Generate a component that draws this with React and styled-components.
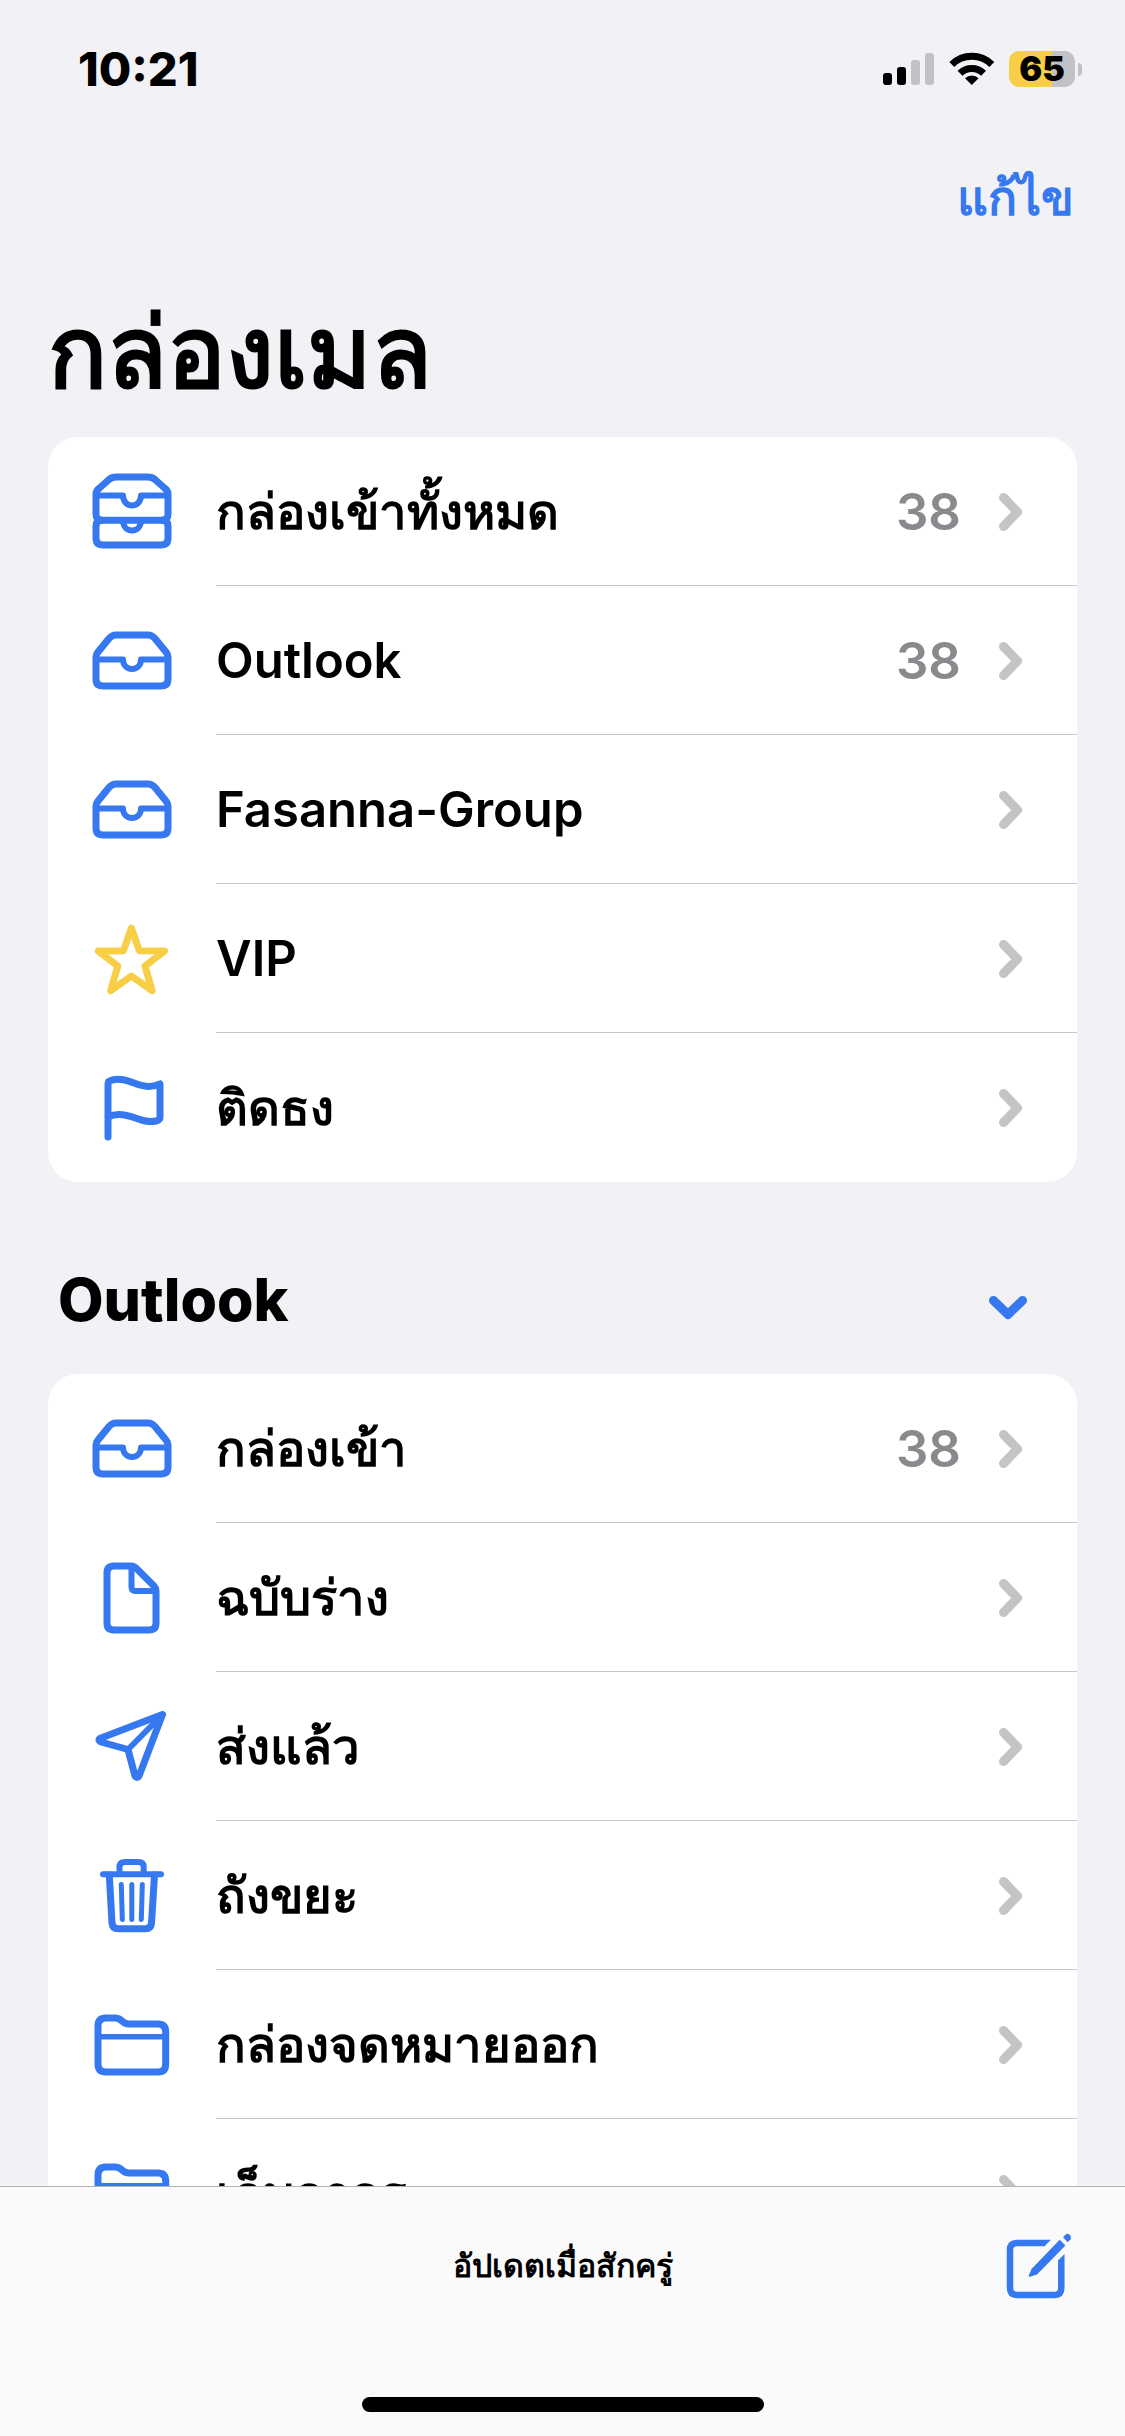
import React, { useState } from 'react'
import styled, { createGlobalStyle, ThemeProvider } from 'styled-components'

const theme = {
	blue: '#3578f0',
	yellow: '#f7ce46',
	grey: '#8a8a8e',
	chevron: '#c4c4c6',
	line: '#c6c6c8',
	page: '#f2f1f6',
	bar: '#fafafa'
}

const icons = {
	trays: (
		<>
			<path d="M10 49.3Q4 49.3 4 43V23Q4 20 7 17.5L17 8.5Q20 6 24 6H56Q60 6 63 8.5L73 17.5Q76 20 76 23V43Q76 49.3 70 49.3Z" />
			<path d="M10 49.3Q4 49.3 4 55V67Q4 74 11 74H69Q76 74 76 67V55Q76 49.3 70 49.3" />
			<path d="M4 24.5H31C31 30 34.5 34.5 40 34.5S49 30 49 24.5H76" strokeWidth="6" />
			<path d="M31 49.3C31 55 34.5 59.5 40 59.5S49 55 49 49.3" strokeWidth="6" />
		</>
	),
	tray: (
		<>
			<path d="M11 66Q4 66 4 59V37Q4 34.5 6 32L17 18.5Q20 15 24 15H56Q60 15 63 18.5L74 32Q76 34.5 76 37V59Q76 66 69 66Z" />
			<path d="M4 39.5H31C31 45 34.5 49 40 49S49 45 49 39.5H76" strokeWidth="6" />
		</>
	),
	star: (
		<path d="M39.4 10L47.3 32.7L72.6 33L53 48L60.1 72.7L39.4 58L18.7 72.7L25.8 48L6.2 33L31.5 32.7Z" />
	),
	flag: (
		<path d="M16 70V17Q16 14 19 13.4C34 9 44 19.5 57 19.5Q62 19.5 68 17V50Q68 53 64 54C50 57 42 47.5 27 47.5Q21 47.5 16 50" />
	),
	doc: (
		<>
			<path d="M22 9H39Q42 9 45 12L62 29Q64 31 64 34V66Q64 73 57 73H22Q15 73 15 66V16Q15 9 22 9Z" />
			<path d="M39.5 9V30Q39.5 34 43.5 34H64" strokeWidth="6" />
		</>
	),
	plane: (
		<>
			<path d="M70.5 8.5L9 32Q5 34 9 36L36 43.5L43 70Q45 73 47 70Z" />
			<path d="M36 43.5L70.5 8.5" strokeWidth="6" />
		</>
	),
	trash: (
		<>
			<path d="M11 19.3H69" strokeWidth="6" />
			<path d="M27.5 19V12Q27.5 7 33 7H46.5Q51.7 7 51.7 12V19" strokeWidth="6" />
			<path d="M17.3 20L20 68Q20.4 73.7 26 73.7H53.5Q59.2 73.7 59.5 68L62.5 20" />
			<path d="M29.3 29.5L30.3 64.5M39.8 29.5V64.5M50.3 29.5L49.3 64.5" strokeWidth="5" />
		</>
	),
	folder: (
		<>
			<path d="M6 22Q6 14 14 14H23Q27 14 30 17Q33 20 37 20H66Q73.7 20 73.7 28V60Q73.7 68 66 68H14Q6 68 6 60Z" />
			<path d="M6 32.7H74" strokeWidth="5.5" />
		</>
	)
}

const favorites = [
	{ icon: 'trays', name: 'กล่องเข้าทั้งหมด', count: 38 },
	{ icon: 'tray', name: 'Outlook', count: 38 },
	{ icon: 'tray', name: 'Fasanna-Group' },
	{ icon: 'star', name: 'VIP', color: theme.yellow },
	{ icon: 'flag', name: 'ติดธง' }
]

const outlook = [
	{ icon: 'tray', name: 'กล่องเข้า', count: 38 },
	{ icon: 'doc', name: 'ฉบับร่าง' },
	{ icon: 'plane', name: 'ส่งแล้ว' },
	{ icon: 'trash', name: 'ถังขยะ' },
	{ icon: 'folder', name: 'กล่องจดหมายออก' },
	{ icon: 'folder', name: 'เก็บถาวร' }
]

const MailboxList = ({ items }) => (
	<Card>
		{items.map(({ icon, name, count, color }) => (
			<li key={name}>
				<Row href="#">
					<RowIcon viewBox="0 0 80 80" $color={color} aria-hidden="true">
						{icons[icon]}
					</RowIcon>
					<RowBody>
						<RowName>{name}</RowName>
						{count && <Count>{count}</Count>}
						<Chevron viewBox="0 0 24 38" aria-hidden="true">
							<path d="M4.5 4.5L18.5 19L4.5 33.5" />
						</Chevron>
					</RowBody>
				</Row>
			</li>
		))}
	</Card>
)

const App = () => {
	const [open, setOpen] = useState(true)

	return (
		<ThemeProvider theme={theme}>
			<GlobalStyle />
			<Screen>
				<StatusBar>
					<Time>10:21</Time>
					<StatusIcons>
						<Signal viewBox="0 0 52 32" aria-hidden="true">
							<rect y="20" width="9" height="12" rx="3" />
							<rect x="14" y="14" width="9" height="18" rx="3" />
							<rect x="28" y="7" width="9" height="25" rx="3" fill="#c2c1c6" />
							<rect x="42" width="9" height="32" rx="3" fill="#c2c1c6" />
						</Signal>
						<Wifi viewBox="0 0 46 34" aria-hidden="true">
							<path d="M2.8 12.5A28.5 28.5 0 0 1 42.8 12.5" />
							<path d="M11 21.2A17 17 0 0 1 34.6 21.2" />
							<path d="M22.8 33L16 26.2A9.8 9.8 0 0 1 29.6 26.2Z" fill="#000" stroke="none" />
						</Wifi>
						<Battery>
							<BatteryLevel>65</BatteryLevel>
							<BatteryTip />
						</Battery>
					</StatusIcons>
				</StatusBar>
				<NavBar>
					<EditButton type="button">แก้ไข</EditButton>
				</NavBar>
				<Content>
					<Title>กล่องเมล</Title>
					<MailboxList items={favorites} />
					<SectionHeader>
						<SectionTitle>Outlook</SectionTitle>
						<Toggle
							type="button"
							aria-label="Outlook"
							aria-expanded={open}
							onClick={() => setOpen(!open)}
						>
							<ToggleIcon viewBox="0 0 38 24" aria-hidden="true">
								<path d="M4.5 4.5L19 18.5L33.5 4.5" />
							</ToggleIcon>
						</Toggle>
					</SectionHeader>
					{open && <MailboxList items={outlook} />}
				</Content>
				<BottomBar>
					<Tools>
						<Updated>อัปเดตเมื่อสักครู่</Updated>
						<ComposeButton type="button" aria-label="เขียน">
							<ComposeIcon viewBox="0 0 64 64" aria-hidden="true">
								<path
									d="M38 9H10Q3 9 3 16V54Q3 61 10 61H47.5Q54.3 61 54.3 54V26"
									fill="none"
									stroke="currentColor"
									strokeWidth="6.5"
								/>
								<path d="M37.5 12.2V5.8H43.9ZM51 26.5H57.5V20Z" />
								<path d="M21.8 41.5L24.5 35L52.7 5.8L58.4 11.5L30 40.4L23 42.8Q21.4 43 21.8 41.5Z" />
								<path d="M56 3.2L59 0.2Q61 -0.8 63 1.2Q65 3.2 63.6 5.2L60.6 8.2Z" />
							</ComposeIcon>
						</ComposeButton>
					</Tools>
					<HomeIndicator />
				</BottomBar>
			</Screen>
		</ThemeProvider>
	)
}

export default App

const GlobalStyle = createGlobalStyle`
	* {
		box-sizing: border-box;
	}

	body {
		margin: 0;
		background: ${props => props.theme.page};
		color: #000;
		font-family: Inter, 'Liberation Sans', sans-serif;
	}
`

const Screen = styled.div`
	display: flex;
	flex-direction: column;
	height: 100vh;
`

const StatusBar = styled.header`
	display: flex;
	flex: none;
	align-items: center;
	justify-content: space-between;
	height: 138px;
	padding: 0 43px 0 78px;
`

const Time = styled.span`
	font-size: 47px;
	font-weight: 800;
	line-height: 52px;
`

const StatusIcons = styled.div`
	display: flex;
	align-items: center;
	gap: 14px;
`

const Signal = styled.svg`
	width: 52px;
	height: 32px;
`

const Wifi = styled.svg`
	width: 46px;
	height: 34px;
	fill: none;
	stroke: #000;
	stroke-width: 7px;
`

const Battery = styled.div`
	display: flex;
	align-items: center;
	gap: 3px;
`

const BatteryLevel = styled.span`
	width: 66px;
	border-radius: 10px;
	background: linear-gradient(
		to right,
		${props => props.theme.yellow} 65%,
		#c2c1c6 65%
	);
	font-size: 34px;
	font-weight: 900;
	line-height: 36px;
	text-align: center;
`

const BatteryTip = styled.span`
	width: 4px;
	height: 13px;
	border-radius: 0 4px 4px 0;
	background: #c2c1c6;
`

const NavBar = styled.nav`
	display: flex;
	flex: none;
	align-items: center;
	justify-content: flex-end;
	height: 120px;
	padding: 0 51px;
`

const Button = styled.button`
	display: flex;
	padding: 0;
	border: 0;
	background: none;
	color: ${props => props.theme.blue};
	font: inherit;
	cursor: pointer;
`

const EditButton = styled(Button)`
	font-size: 48px;
	font-weight: 600;
	line-height: 72px;
`

const Content = styled.main`
	flex: 1;
	min-height: 0;
	overflow: hidden;
	padding: 0 48px;
`

const Title = styled.h1`
	margin: 34px 0 25px;
	font-size: 98px;
	font-weight: 700;
	line-height: 120px;
`

const Card = styled.ul`
	overflow: hidden;
	margin: 0;
	padding: 0;
	border-radius: 30px;
	background: #fff;
	list-style: none;
`

const RowBody = styled.span`
	display: flex;
	flex: 1;
	align-items: center;
	min-width: 0;
	height: 149px;
	padding: 2px 54px 0 0;
	border-bottom: 1px solid ${props => props.theme.line};

	li:last-child & {
		border-color: transparent;
	}
`

const Row = styled.a`
	display: flex;
	color: inherit;
	text-decoration: none;
`

const RowIcon = styled.svg`
	flex: none;
	width: 80px;
	height: 80px;
	margin: 34px 44px 0;
	fill: none;
	stroke: ${props => props.$color || props.theme.blue};
	stroke-width: 7px;
	stroke-linecap: round;
	stroke-linejoin: round;
`

const RowName = styled.span`
	flex: 1;
	font-size: 49px;
	font-weight: 600;
	line-height: 72px;
`

const Count = styled.span`
	color: ${props => props.theme.grey};
	font-size: 51px;
	font-weight: 600;
	line-height: 72px;
`

const Chevron = styled.svg`
	flex: none;
	width: 24px;
	height: 38px;
	margin-left: 38px;
	fill: none;
	stroke: ${props => props.theme.chevron};
	stroke-width: 9px;
	stroke-linecap: round;
	stroke-linejoin: round;
`

const SectionHeader = styled.div`
	display: flex;
	align-items: center;
	justify-content: space-between;
	margin: 80px 0 36px;
	padding: 0 50px 0 10px;
`

const SectionTitle = styled.h2`
	margin: 0;
	font-size: 59px;
	font-weight: 800;
	line-height: 76px;
`

const Toggle = styled(Button)`
	padding-top: 16px;
`

const ToggleIcon = styled.svg`
	width: 38px;
	height: 24px;
	fill: none;
	stroke: currentColor;
	stroke-width: 9px;
	stroke-linecap: round;
	stroke-linejoin: round;
`

const BottomBar = styled.footer`
	flex: none;
	border-top: 1px solid #b2b2b4;
	background: ${props => props.theme.bar};
`

const Tools = styled.div`
	display: grid;
	grid-template-columns: 1fr auto 1fr;
	align-items: center;
	height: 158px;
	padding: 0 54px;
`

const Updated = styled.span`
	grid-column: 2;
	font-size: 32px;
	font-weight: 600;
	line-height: 48px;
`

const ComposeButton = styled(Button)`
	justify-self: end;
`

const ComposeIcon = styled.svg`
	overflow: visible;
	width: 64px;
	height: 64px;
	fill: currentColor;
`

const HomeIndicator = styled.div`
	width: 402px;
	height: 15px;
	margin: 52px auto 24px;
	border-radius: 8px;
	background: #000;
`
